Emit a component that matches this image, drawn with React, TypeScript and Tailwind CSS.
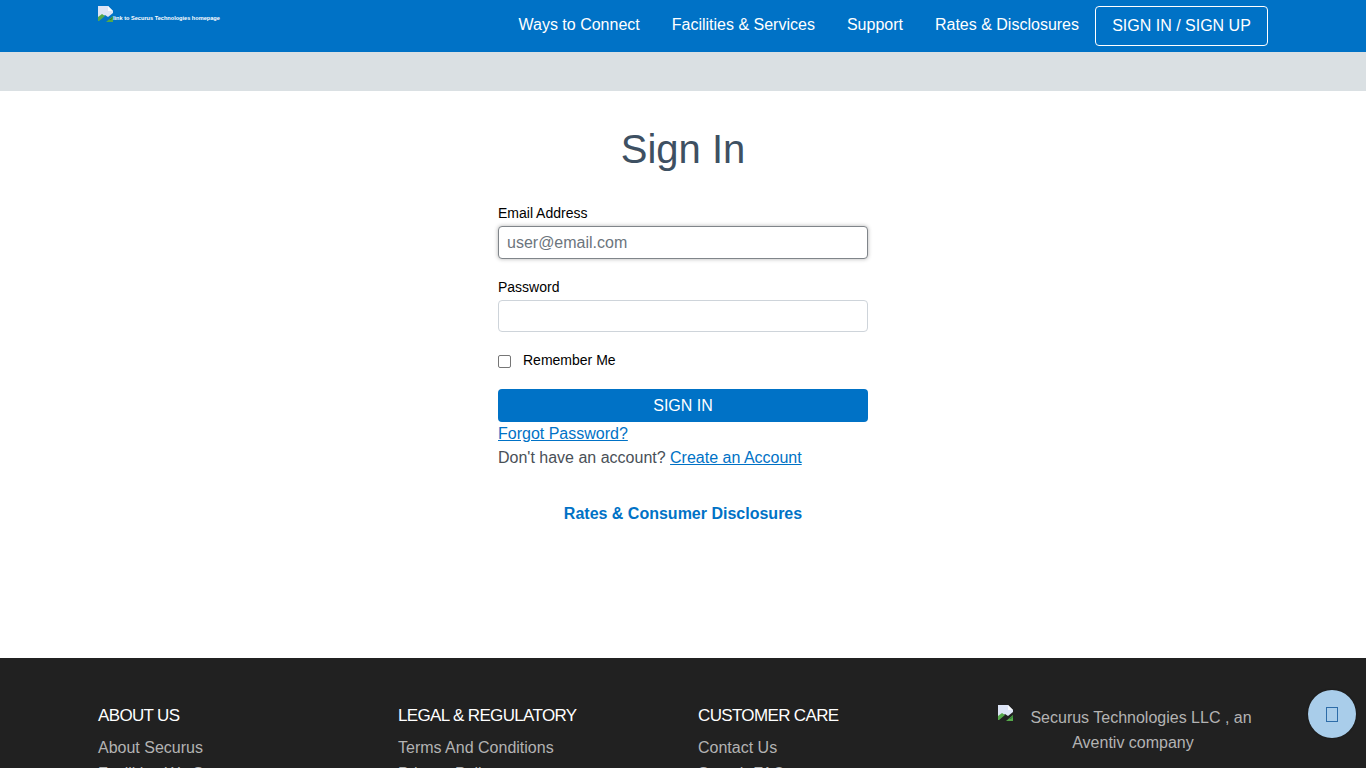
function BrokenImage({ className }: { className?: string }) {
  return (
    <svg className={className} width="16" height="16" viewBox="0 0 16 16">
      <path d="M0 0h10l5 5v2L10 11 7 9l-7 6z" fill="#dde4f6" />
      <path d="M10 0l5 5h-5z" fill="#f7f9fd" />
      <path d="M0 15V11l4-3 3 2-6 5z" fill="#55a84a" />
      <path d="M8 16l7-6v6z" fill="#55a84a" />
      <path d="M11 14l4-3v1l-2 2z" fill="#2f7d32" />
    </svg>
  );
}

const navLinks = ["Ways to Connect", "Facilities & Services", "Support", "Rates & Disclosures"];

const footerCols = [
  { title: "ABOUT US", links: ["About Securus", "Facilities We Serve"] },
  { title: "LEGAL & REGULATORY", links: ["Terms And Conditions", "Privacy Policy"] },
  { title: "CUSTOMER CARE", links: ["Contact Us", "Search FAQs"] },
];

export default function App() {
  return (
    <div className="relative flex h-screen flex-col overflow-hidden bg-white font-['Liberation_Sans',Arial,sans-serif]">
      <header className="h-[52px] shrink-0 bg-[#0072c6]">
        <div className="mx-auto flex h-full w-[1170px] items-start justify-between">
          <div className="mt-[6px] flex items-start text-[5.6px] leading-[24px] font-bold text-white">
            <BrokenImage />
            <span className="-ml-[1px]">link to Securus Technologies homepage</span>
          </div>
          <nav className="mt-[6px] flex items-center text-base text-white">
            {navLinks.map((link, i) => (
              <a key={link} className={i === 3 ? "mr-[16px] -mt-[2px] leading-[36px]" : "mr-[32px] -mt-[2px] leading-[36px]"}>
                {link}
              </a>
            ))}
            <a className="flex h-[40px] w-[173px] items-center justify-center rounded border border-white">
              SIGN IN / SIGN UP
            </a>
          </nav>
        </div>
      </header>
      <div className="h-[39px] shrink-0 bg-[#dae0e3]" />

      <main className="flex h-[567px] shrink-0 flex-col items-center">
        <h1 className="mt-[32px] text-center text-[40px] leading-[52px] text-[#3e5062]">Sign In</h1>
        <form className="mt-[29px] w-[370px] text-[14px] text-black">
          <label className="block leading-[18px]">Email Address</label>
          <input
            placeholder="user@email.com"
            className="mt-[4px] block h-[33px] w-full rounded border border-[#80858a] bg-white px-2 text-base shadow-[0_0_4px_rgba(0,0,0,0.3)] outline-none placeholder:text-[#6c757d]"
          />
          <label className="mt-[19px] block leading-[18px]">Password</label>
          <input
            type="password"
            className="mt-[4px] block h-[32px] w-full rounded border border-[#ced4da] bg-white px-2 text-base outline-none"
          />
          <div className="mt-[19px] flex h-[18px] items-center">
            <input type="checkbox" className="mt-[2px] h-[13px] w-[13px] appearance-none rounded-[2px] border border-[#767676] bg-white" />
            <span className="ml-[12px]">Remember Me</span>
          </div>
          <button
            type="button"
            className="mt-[20px] block h-[33px] w-full rounded bg-[#0072c6] text-base text-white"
          >
            SIGN IN
          </button>
          <div className="text-base leading-[24px] text-[#495057]">
            <a className="block text-[#0072c6] underline">Forgot Password?</a>
            <p>
              Don't have an account? <a className="text-[#0072c6] underline">Create an Account</a>
            </p>
          </div>
        </form>
        <a className="mt-[32px] text-base leading-[24px] font-bold text-[#0072c6]">Rates &amp; Consumer Disclosures</a>
      </main>

      <footer className="flex-1 bg-[#212121]">
        <div className="mx-auto flex w-[1170px] pt-[48px]">
          {footerCols.map((col) => (
            <div key={col.title} className="w-[300px]">
              <h2 className="text-[17px] leading-[20px] tracking-[-0.65px] text-white">{col.title}</h2>
              <ul className="mt-[10px] text-base leading-[24px] text-[#b3b3b3]">
                {col.links.map((link) => (
                  <li key={link} className="mb-[2px]">
                    {link}
                  </li>
                ))}
              </ul>
            </div>
          ))}
          <div className="-mt-[1px] w-[270px] text-center text-base leading-[25px] text-[#b3b3b3]">
            <BrokenImage className="relative -top-[3px] mr-[16px] mb-[5px] inline-block align-middle" />
            Securus Technologies LLC , an
            <span className="inline-block w-[16px]" />
            <br />
            Aventiv company
          </div>
        </div>
      </footer>

      <button className="absolute top-[690px] left-[1308px] flex h-[48px] w-[48px] items-center justify-center rounded-full bg-[#a9cdea] shadow-[0_0_2px_rgba(0,0,0,0.5)]">
        <span className="h-[15px] w-[12px] border border-[#2d6ca8]" />
      </button>
    </div>
  );
}
